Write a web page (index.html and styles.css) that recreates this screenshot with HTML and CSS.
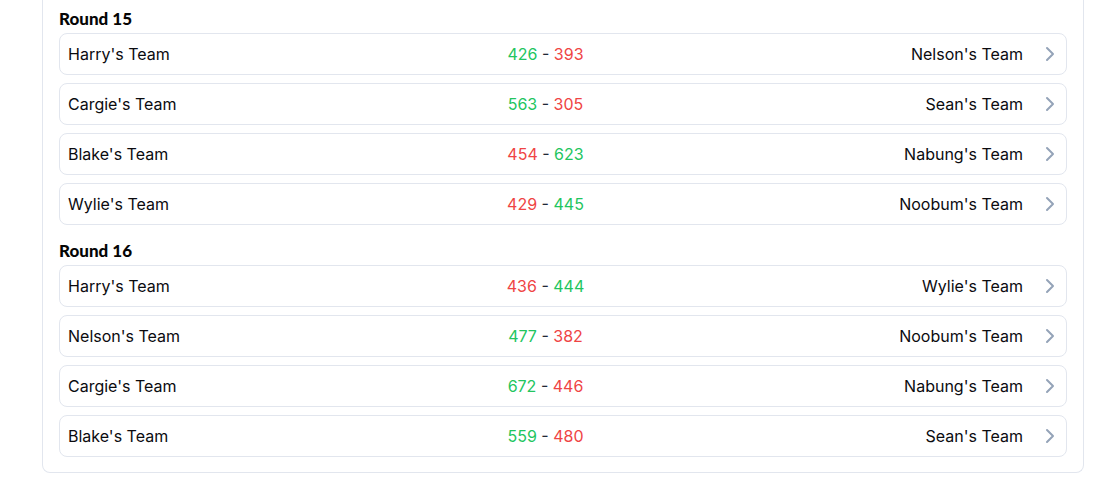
FILE: index.html
```html
<!DOCTYPE html>
<html lang="en">
<head>
<meta charset="utf-8">
<link rel="stylesheet" href="styles.css">
</head>
<body>
<div class="card">
  <section class="round">
    <h2 class="round-title">Round 15</h2>
    <div class="matches">
      <div class="match"><span class="team">Harry's Team</span><span class="score"><span class="win">426</span> - <span class="loss">393</span></span><span class="team right">Nelson's Team</span><svg class="chev" viewBox="0 0 24 24"><path d="m9 18 6-6-6-6"/></svg></div>
      <div class="match"><span class="team">Cargie's Team</span><span class="score"><span class="win">563</span> - <span class="loss">305</span></span><span class="team right">Sean's Team</span><svg class="chev" viewBox="0 0 24 24"><path d="m9 18 6-6-6-6"/></svg></div>
      <div class="match"><span class="team">Blake's Team</span><span class="score"><span class="loss">454</span> - <span class="win">623</span></span><span class="team right">Nabung's Team</span><svg class="chev" viewBox="0 0 24 24"><path d="m9 18 6-6-6-6"/></svg></div>
      <div class="match"><span class="team">Wylie's Team</span><span class="score"><span class="loss">429</span> - <span class="win">445</span></span><span class="team right">Noobum's Team</span><svg class="chev" viewBox="0 0 24 24"><path d="m9 18 6-6-6-6"/></svg></div>
    </div>
  </section>
  <section class="round">
    <h2 class="round-title">Round 16</h2>
    <div class="matches">
      <div class="match"><span class="team">Harry's Team</span><span class="score"><span class="loss">436</span> - <span class="win">444</span></span><span class="team right">Wylie's Team</span><svg class="chev" viewBox="0 0 24 24"><path d="m9 18 6-6-6-6"/></svg></div>
      <div class="match"><span class="team">Nelson's Team</span><span class="score"><span class="win">477</span> - <span class="loss">382</span></span><span class="team right">Noobum's Team</span><svg class="chev" viewBox="0 0 24 24"><path d="m9 18 6-6-6-6"/></svg></div>
      <div class="match"><span class="team">Cargie's Team</span><span class="score"><span class="win">672</span> - <span class="loss">446</span></span><span class="team right">Nabung's Team</span><svg class="chev" viewBox="0 0 24 24"><path d="m9 18 6-6-6-6"/></svg></div>
      <div class="match"><span class="team">Blake's Team</span><span class="score"><span class="win">559</span> - <span class="loss">480</span></span><span class="team right">Sean's Team</span><svg class="chev" viewBox="0 0 24 24"><path d="m9 18 6-6-6-6"/></svg></div>
    </div>
  </section>
</div>
</body>
</html>
```
FILE: styles.css
```css
html, body {
  margin: 0;
  padding: 0;
  background: #ffffff;
}
body {
  font-family: "Inter", "Liberation Sans", sans-serif;
  color: #0b0b0f;
}
.card {
  margin-left: 42px;
  width: 1042px;
  box-sizing: border-box;
  border: 1px solid #e2e6ee;
  border-top: none;
  border-radius: 0 0 8px 8px;
  padding: 5px 16px 15px 16px;
}
.round + .round {
  margin-top: 12px;
}
.round-title {
  margin: 0;
  font-family: "Lato", "DejaVu Sans", sans-serif;
  font-weight: 900;
  font-size: 17px;
  line-height: 28px;
  color: #050505;
}
.matches {
  display: flex;
  flex-direction: column;
  gap: 8px;
}
.match {
  display: flex;
  align-items: center;
  border: 1px solid #e2e6ee;
  border-radius: 8px;
  padding: 8px 4px 8px 8px;
  font-size: 16px;
  line-height: 24px;
}
.team, .score {
  flex: 1 1 0;
  min-width: 0;
}
.score {
  text-align: center;
  color: #1f2937;
}
.team.right {
  text-align: right;
}
.win {
  color: #22c55e;
}
.loss {
  color: #ef4444;
}
.chev {
  width: 24px;
  height: 24px;
  margin-left: 15px;
  flex: none;
  fill: none;
  stroke: #94a3b8;
  stroke-width: 2;
  stroke-linecap: round;
  stroke-linejoin: round;
}
```
